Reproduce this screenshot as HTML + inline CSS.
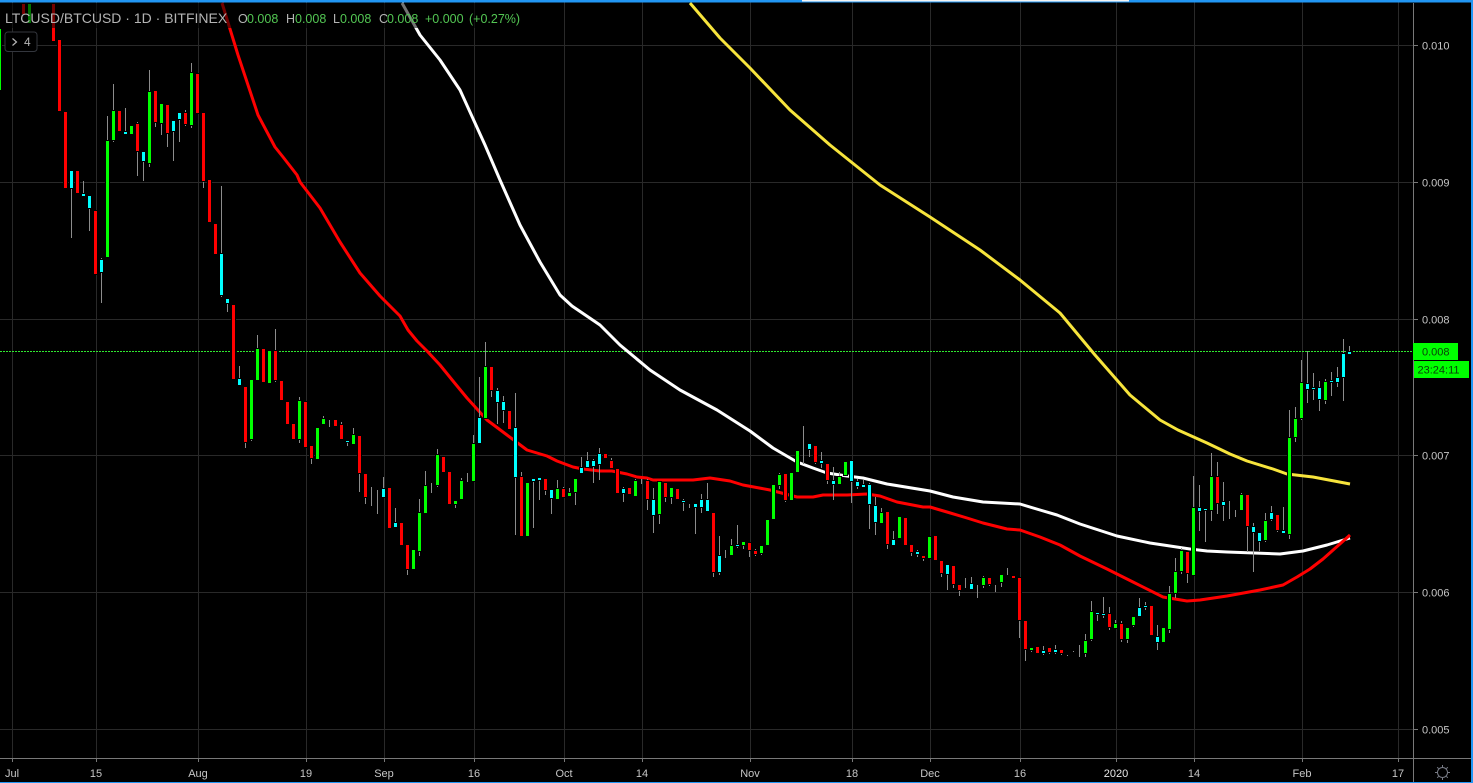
<!DOCTYPE html>
<html lang="en">
<head>
<meta charset="utf-8">
<title>LTCUSD/BTCUSD</title>
<style>
html,body{margin:0;padding:0;background:#000;width:1473px;height:783px;overflow:hidden}
svg{display:block;position:absolute;left:0;top:0}
text{font-family:"Liberation Sans",Arial,sans-serif}
</style>
</head>
<body>
<svg width="1473" height="783" viewBox="0 0 1473 783" xmlns="http://www.w3.org/2000/svg">
<rect width="1473" height="783" fill="#000"/>
<!-- grid -->
<path fill="none" stroke="#292929" stroke-width="1" d="M12.5 0V758M96.5 0V758M198.5 0V758M306.5 0V758M384.5 0V758M474.5 0V758M564.5 0V758M642.5 0V758M750.5 0V758M852.5 0V758M930.5 0V758M1020.5 0V758M1116.5 0V758M1194.5 0V758M1302.5 0V758M1398.5 0V758M0 45.5H1413M0 182.5H1413M0 319.5H1413M0 455.5H1413M0 592.5H1413M0 729.5H1413"/>
<!-- price line -->
<path d="M0 351.5H1413" stroke="#2fe82f" stroke-width="1" stroke-dasharray="2 1" fill="none"/>
<!-- moving averages -->
<g fill="none" stroke-width="3" stroke-linejoin="round" stroke-linecap="butt">
<polyline stroke="#f7e43c" points="690,3 720,38 750,68 790,110 830,145 880,185 930,217 980,250 1020,280 1060,313 1095,355 1130,395 1160,420 1178,430 1207,443 1230,454 1247,461 1273,469 1287,474 1313,477 1350,484"/>
<polyline stroke="#ffffff" points="402,3 420,35 440,60 460,90 485,145 500,180 520,225 540,262 560,295 572,306 600,325 620,345 650,370 680,390 717,410 750,431 773,448 797,462 813,468 827,473 847,476 863,478 887,484 930,491 953,497 983,502 1020,504 1040,510 1057,515 1080,524 1117,536 1150,543 1190,549 1207,551 1227,552 1280,554 1303,551 1327,545 1350,538"/>
<polyline stroke="#ff0000" points="222,3 230,29 238,55 248,85 258,115 275,147 283,157 297,175 300,182 320,208 340,242 360,273 380,296 400,316 408,330 417,341 427,351 440,365 453,381 467,398 487,420 507,435 527,450 547,456 557,461 573,467 583,469 600,471 612,471 627,474 637,477 647,478 653,480 693,480 710,478 730,481 743,485 770,490 797,497 813,497 823,495 847,495 867,494 880,496 897,502 923,507 930,507 947,512 967,518 983,523 1007,529 1020,530 1040,537 1060,545 1080,556 1107,569 1133,582 1163,597 1187,601 1200,600 1227,596 1260,590 1283,585 1297,577 1310,569 1323,559 1350,535"/>
</g>
<!-- wicks -->
<path fill="none" stroke="#8c8c8c" stroke-width="1" d="M71.5 171V238M83.5 181V194M89.5 196V231M101.5 258V303M107.5 116V141M113.5 84V142M125.5 108V134M131.5 125V135M137.5 122V176M143.5 152V181M149.5 70V167M155.5 91V127M161.5 104V135M167.5 105V147M173.5 121V161M179.5 113V142M185.5 110V126M191.5 63V128M203.5 113V188M221.5 186V297M227.5 299V312M239.5 366V385M245.5 387V448M251.5 380V441M257.5 335V380M275.5 329V382M299.5 397V443M311.5 446V464M323.5 416V424M329.5 420V427M341.5 422V439M347.5 441V446M353.5 428V444M359.5 436V492M365.5 474V504M371.5 487V506M377.5 490V514M383.5 477V497M395.5 508V527M407.5 545V575M419.5 499V556M425.5 471V513M431.5 483V493M437.5 449V487M455.5 501V508M461.5 478V499M467.5 473V482M473.5 435V481M479.5 377V443M485.5 342V418M491.5 367V397M497.5 388V424M503.5 396V423M515.5 393V535M521.5 472V536M533.5 479V528M539.5 478V500M545.5 479V495M551.5 490V514M557.5 480V499M563.5 487V497M569.5 488V496M575.5 479V505M581.5 457V473M587.5 452V467M593.5 459V483M599.5 448V480M611.5 458V468M623.5 487V502M635.5 479V496M641.5 479V484M647.5 479V510M653.5 488V533M659.5 482V524M665.5 483V502M671.5 488V504M683.5 499V511M689.5 504V508M695.5 504V534M701.5 494V513M707.5 483V511M713.5 513V577M719.5 536V575M725.5 550V558M731.5 539V555M737.5 525V548M743.5 542V549M749.5 543V557M755.5 549V556M761.5 546V555M779.5 473V489M785.5 474V502M803.5 426V464M809.5 444V457M815.5 446V464M821.5 452V468M827.5 464V484M833.5 467V500M839.5 472V484M851.5 461V503M857.5 479V489M863.5 480V487M869.5 483V529M875.5 497V535M881.5 508V523M887.5 512V549M893.5 531V545M911.5 545V556M917.5 550V557M923.5 556V561M941.5 561V577M947.5 565V590M953.5 566V588M959.5 585V596M965.5 578V588M971.5 577V589M977.5 585V598M983.5 576V588M989.5 578V586M995.5 585V592M1001.5 575V587M1007.5 568V575M1019.5 578V638M1025.5 621V661M1031.5 648V652M1043.5 646V655M1049.5 648V654M1055.5 645V654M1061.5 650V655M1067.5 655V656M1073.5 651V652M1079.5 645V657M1085.5 634V657M1091.5 601V641M1097.5 613V621M1103.5 597V618M1109.5 607V630M1115.5 620V628M1121.5 621V642M1127.5 628V643M1133.5 617V627M1139.5 598V616M1145.5 602V610M1157.5 625V650M1169.5 586V633M1175.5 558V598M1181.5 548V574M1187.5 552V583M1193.5 476V575M1199.5 485V531M1205.5 509V542M1211.5 453V521M1217.5 462V514M1223.5 482V521M1229.5 501V519M1235.5 510V517M1241.5 493V510M1247.5 495V552M1253.5 523V572M1259.5 533V551M1265.5 513V542M1271.5 506V521M1277.5 515V532M1283.5 507V533M1289.5 410V539M1295.5 407V442M1301.5 360V420M1307.5 351V403M1313.5 373V400M1319.5 381V411M1325.5 379V404M1331.5 372V396M1337.5 367V387M1343.5 339V401M1349.5 346V354"/>
<!-- candle bodies -->
<g stroke="#000" stroke-width="2" paint-order="stroke">
<path fill="#00ff00" d="M-2 29h3V90h-3zM28 4h3V23h-3zM106 141h3V257h-3zM112 111h3V140h-3zM130 126h3V134h-3zM148 92h3V163h-3zM160 104h3V123h-3zM190 73h3V125h-3zM250 380h3V439h-3zM256 349h3V380h-3zM268 351h3V383h-3zM298 401h3V439h-3zM316 428h3V459h-3zM322 419h3V424h-3zM352 435h3V444h-3zM412 550h3V569h-3zM418 513h3V551h-3zM424 486h3V513h-3zM436 455h3V485h-3zM454 501h3V504h-3zM460 481h3V499h-3zM472 444h3V481h-3zM484 367h3V418h-3zM526 483h3V536h-3zM556 489h3V499h-3zM568 493h3V496h-3zM574 479h3V492h-3zM634 481h3V496h-3zM658 482h3V514h-3zM670 488h3V497h-3zM730 546h3V555h-3zM742 542h3V545h-3zM760 546h3V553h-3zM766 520h3V545h-3zM772 485h3V519h-3zM778 475h3V485h-3zM790 473h3V500h-3zM796 451h3V472h-3zM838 477h3V484h-3zM844 462h3V475h-3zM880 513h3V523h-3zM898 517h3V538h-3zM928 537h3V558h-3zM982 578h3V585h-3zM1000 575h3V582h-3zM1030 648h3V650h-3zM1084 641h3V653h-3zM1090 612h3V639h-3zM1114 624h3V628h-3zM1126 628h3V639h-3zM1132 617h3V625h-3zM1162 628h3V642h-3zM1168 594h3V629h-3zM1174 572h3V593h-3zM1180 551h3V571h-3zM1192 508h3V575h-3zM1210 477h3V510h-3zM1240 495h3V510h-3zM1264 521h3V540h-3zM1288 438h3V534h-3zM1294 419h3V437h-3zM1300 383h3V418h-3zM1324 382h3V400h-3z"/>
<path fill="#ff0000" d="M22 4h3V14h-3zM52 4h3V41h-3zM58 40h3V111h-3zM64 112h3V188h-3zM76 171h3V193h-3zM94 211h3V274h-3zM118 111h3V131h-3zM136 124h3V151h-3zM154 91h3V122h-3zM166 105h3V133h-3zM184 113h3V124h-3zM196 74h3V113h-3zM202 113h3V181h-3zM208 180h3V222h-3zM214 224h3V254h-3zM232 305h3V379h-3zM244 387h3V442h-3zM262 349h3V382h-3zM274 351h3V380h-3zM280 381h3V400h-3zM286 402h3V424h-3zM292 424h3V439h-3zM304 402h3V447h-3zM310 446h3V458h-3zM334 420h3V426h-3zM340 425h3V439h-3zM358 436h3V473h-3zM364 474h3V497h-3zM388 488h3V528h-3zM400 523h3V545h-3zM406 545h3V569h-3zM442 457h3V472h-3zM448 472h3V504h-3zM490 367h3V390h-3zM508 411h3V429h-3zM520 477h3V536h-3zM544 479h3V490h-3zM562 489h3V497h-3zM604 454h3V458h-3zM610 461h3V468h-3zM616 469h3V493h-3zM628 488h3V494h-3zM646 481h3V499h-3zM664 483h3V497h-3zM676 489h3V499h-3zM712 513h3V572h-3zM748 543h3V550h-3zM754 551h3V554h-3zM784 474h3V500h-3zM814 446h3V462h-3zM826 464h3V480h-3zM886 512h3V544h-3zM904 518h3V545h-3zM910 545h3V552h-3zM922 556h3V558h-3zM934 536h3V560h-3zM940 561h3V573h-3zM952 566h3V584h-3zM958 585h3V590h-3zM988 578h3V584h-3zM1012 576h3V578h-3zM1018 578h3V620h-3zM1024 621h3V649h-3zM1036 647h3V653h-3zM1048 648h3V652h-3zM1060 650h3V653h-3zM1108 614h3V627h-3zM1120 624h3V639h-3zM1150 606h3V635h-3zM1186 552h3V573h-3zM1216 477h3V503h-3zM1246 495h3V526h-3zM1276 515h3V530h-3z"/>
<path fill="#00ffff" d="M70 171h3V188h-3zM82 194h3V196h-3zM88 196h3V208h-3zM100 260h3V272h-3zM124 132h3V134h-3zM142 152h3V161h-3zM172 121h3V131h-3zM178 113h3V119h-3zM220 254h3V295h-3zM226 299h3V303h-3zM238 379h3V385h-3zM346 441h3V442h-3zM382 489h3V497h-3zM394 523h3V527h-3zM478 418h3V443h-3zM496 391h3V402h-3zM502 402h3V410h-3zM514 428h3V477h-3zM532 479h3V481h-3zM538 478h3V480h-3zM550 490h3V498h-3zM580 468h3V473h-3zM586 461h3V467h-3zM592 461h3V466h-3zM598 454h3V464h-3zM622 489h3V493h-3zM652 500h3V515h-3zM682 501h3V502h-3zM694 504h3V507h-3zM700 500h3V507h-3zM706 500h3V511h-3zM718 556h3V572h-3zM736 545h3V546h-3zM808 444h3V449h-3zM820 461h3V463h-3zM832 481h3V484h-3zM850 461h3V481h-3zM856 482h3V486h-3zM862 485h3V487h-3zM868 485h3V504h-3zM874 506h3V522h-3zM892 540h3V545h-3zM916 552h3V554h-3zM946 565h3V574h-3zM970 584h3V589h-3zM1042 651h3V653h-3zM1054 650h3V652h-3zM1096 613h3V614h-3zM1102 614h3V615h-3zM1138 608h3V616h-3zM1144 606h3V607h-3zM1156 637h3V642h-3zM1198 508h3V511h-3zM1204 509h3V510h-3zM1222 502h3V505h-3zM1252 527h3V532h-3zM1258 533h3V541h-3zM1270 513h3V519h-3zM1282 531h3V533h-3zM1306 384h3V389h-3zM1312 388h3V389h-3zM1318 388h3V399h-3zM1330 381h3V382h-3zM1336 378h3V382h-3zM1342 354h3V377h-3zM1348 352h3V354h-3z"/>
</g>
<!-- legend veil -->
<rect x="0" y="3" width="522" height="25" fill="#000" opacity=".55"/>
<!-- legend text -->
<text x="5" y="23" font-size="14" fill="#b4b4b4" xml:space="preserve">LTCUSD/BTCUSD · 1D · BITFINEX</text>
<g font-size="12.5">
<text x="238" y="23" fill="#b4b4b4">O</text><text x="247" y="23" fill="#53c653">0.008</text>
<text x="286" y="23" fill="#b4b4b4">H</text><text x="295" y="23" fill="#53c653">0.008</text>
<text x="333" y="23" fill="#b4b4b4">L</text><text x="340" y="23" fill="#53c653">0.008</text>
<text x="379" y="23" fill="#b4b4b4">C</text><text x="387" y="23" fill="#53c653">0.008</text>
<text x="425" y="23" fill="#53c653">+0.000</text><text x="469" y="23" fill="#53c653">(+0.27%)</text>
</g>
<!-- indicators button -->
<rect x="5" y="32" width="32" height="19.5" rx="3" ry="3" fill="#000" stroke="#33363d" stroke-width="1"/>
<path d="M12.5 38.5l4 3.5-4 3.5" fill="none" stroke="#b4b4b4" stroke-width="1.2"/>
<text x="24" y="46" font-size="12" fill="#b4b4b4">4</text>
<!-- axes -->
<path fill="none" stroke="#787878" stroke-width="1" d="M1413.5 3V782M0 758.5H1471M12.5 758V762M96.5 758V762M198.5 758V762M306.5 758V762M384.5 758V762M474.5 758V762M564.5 758V762M642.5 758V762M750.5 758V762M852.5 758V762M930.5 758V762M1020.5 758V762M1116.5 758V762M1194.5 758V762M1302.5 758V762M1398.5 758V762M1414 45.5H1418M1414 182.5H1418M1414 319.5H1418M1414 455.5H1418M1414 592.5H1418M1414 729.5H1418"/>
<rect x="1414" y="759" width="57" height="23" fill="#000"/>
<path d="M1413.5 759V782" stroke="#787878" stroke-width="1"/>
<!-- price labels -->
<g font-size="11" fill="#c6c6c6">
<text x="1422" y="49.5">0.010</text>
<text x="1422" y="186.5">0.009</text>
<text x="1422" y="323.5">0.008</text>
<text x="1422" y="459.5">0.007</text>
<text x="1422" y="596.5">0.006</text>
<text x="1422" y="733.5">0.005</text>
</g>
<!-- last price -->
<rect x="1413" y="343" width="45" height="17" fill="#00ff00"/>
<text x="1422" y="355.5" font-size="11" fill="#0a3d0a">0.008</text>
<rect x="1414" y="361" width="55" height="17" fill="#00ff00"/>
<text x="1417.5" y="373.5" font-size="11" fill="#0a3d0a">23:24:11</text>
<!-- time labels -->
<g font-size="11" fill="#c6c6c6" text-anchor="middle">
<text x="12" y="777">Jul</text>
<text x="96" y="777">15</text>
<text x="198" y="777">Aug</text>
<text x="306" y="777">19</text>
<text x="384" y="777">Sep</text>
<text x="474" y="777">16</text>
<text x="564" y="777">Oct</text>
<text x="642" y="777">14</text>
<text x="750" y="777">Nov</text>
<text x="852" y="777">18</text>
<text x="930" y="777">Dec</text>
<text x="1020" y="777">16</text>
<text x="1116" y="777" fill="#e8e8e8">2020</text>
<text x="1194" y="777">14</text>
<text x="1302" y="777">Feb</text>
<text x="1398" y="777">17</text>
</g>
<!-- settings icon -->
<g fill="none" stroke="#787b86" stroke-width="1">
<circle cx="1442.5" cy="772.5" r="5"/>
<path d="M1442.5 765V767M1442.5 778V780M1435 772.5H1437M1448 772.5H1450M1437.2 767.2L1438.6 768.6M1446.4 776.4L1447.8 777.8M1447.8 767.2L1446.4 768.6M1438.6 776.4L1437.2 777.8"/>
</g>
<!-- window frame -->
<rect x="0" y="0" width="1473" height="2.5" fill="#2196f3"/>
<rect x="802" y="0" width="327" height="1.5" fill="#f4f4f4"/>
<rect x="1471" y="0" width="2" height="783" fill="#2196f3"/>
<rect x="0" y="782" width="1473" height="1" fill="#2196f3"/>
</svg>
</body>
</html>
